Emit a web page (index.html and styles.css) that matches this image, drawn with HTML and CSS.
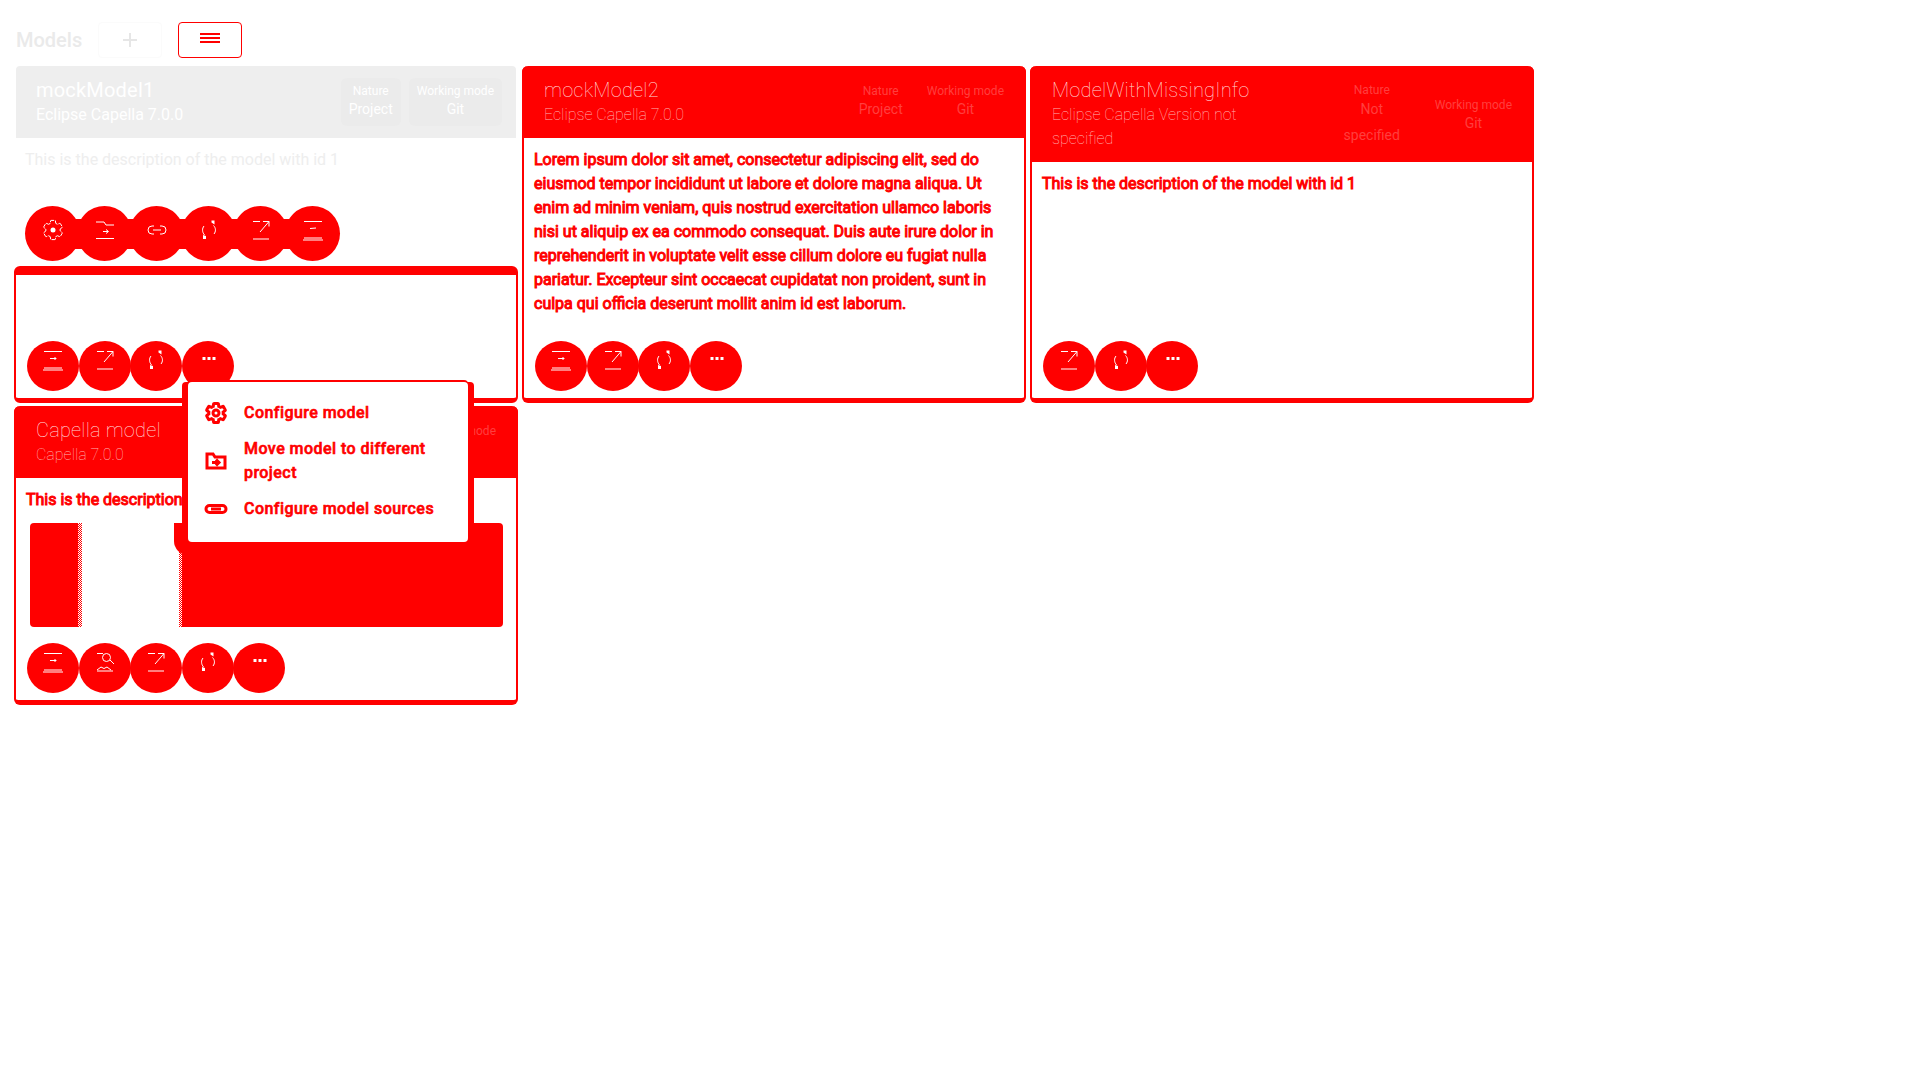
FILE: index.html
```html
<!DOCTYPE html>
<html lang="en">
<head>
    <meta charset="UTF-8">
    <title>Models</title>
    <link rel="stylesheet" href="styles.css">
</head>
<body>
    <svg class="icon-defs" width="0" height="0">
        <defs>
            <path id="gear-shape" d="M19.14 12.94c.04-.3.06-.61.06-.94 0-.32-.02-.64-.07-.94l2.03-1.58a.49.49 0 0 0 .12-.61l-1.92-3.32a.49.49 0 0 0-.59-.22l-2.39.96c-.5-.38-1.03-.7-1.62-.94l-.36-2.54a.48.48 0 0 0-.48-.41h-3.84a.48.48 0 0 0-.47.41l-.36 2.54c-.59.24-1.13.57-1.62.94l-2.39-.96a.49.49 0 0 0-.59.22L2.74 8.87a.48.48 0 0 0 .12.61l2.03 1.58c-.05.3-.09.63-.09.94s.02.64.07.94l-2.03 1.58a.49.49 0 0 0-.12.61l1.92 3.32c.12.22.37.29.59.22l2.39-.96c.5.38 1.03.7 1.62.94l.36 2.54c.05.24.24.41.48.41h3.84c.24 0 .44-.17.47-.41l.36-2.54c.59-.24 1.13-.56 1.62-.94l2.39.96c.22.08.47 0 .59-.22l1.92-3.32a.48.48 0 0 0-.12-.61l-2.01-1.58z"/>
            <symbol id="i-gear" viewBox="0 0 24 24"><use href="#gear-shape" stroke-dasharray="5 1"/><circle class="solid" cx="12" cy="12" r="2.5"/></symbol>
            <symbol id="i-move" viewBox="0 0 24 24"><path d="M3 4h8l2 3h8M10 13.500h5M13 11.500l2.500 2-2.500 2M3 20.500h18"/></symbol>
            <symbol id="i-link" viewBox="0 0 24 24"><path d="M9 8H7a4 4 0 0 0 0 8h2M15 8h2a4 4 0 0 1 0 8h-2M8 12h8"/></symbol>
            <symbol id="i-sync" viewBox="0 0 24 24"><path d="M7 8c-2 2.500-2 6 .5 9M17 16c2-2.500 2-6-.5-8.500"/><path class="solid" d="M14.500 2.500h3v4l-3-2zM6 17l3 1v3H6z"/></symbol>
            <symbol id="i-export" viewBox="0 0 24 24"><path d="M4 3.500h7M14 3.500h6v5M20 3.500l-9 10.500M4 21h16"/></symbol>
            <symbol id="i-push" viewBox="0 0 24 24"><path d="M3 3.500h18M9 10.500h6M13.500 9l1.500 1.500-1.500 1.500M3 20h18M2 22h20"/></symbol>
            <symbol id="i-pull" viewBox="0 0 24 24"><path d="M3 3.500h18M9 10.500l6-.5M3 20h18M2 22h20"/></symbol>
            <symbol id="i-diagram" viewBox="0 0 24 24"><path d="M4 3.500h6M4 21h16M4 20l4-3 3 1.500 3-1.500 4 3M17 10l4 4"/><circle cx="13.500" cy="7.500" r="4"/></symbol>
            <symbol id="i-dots" viewBox="0 0 24 24"><rect class="solid" x="6.500" y="9" width="3" height="3"/><rect class="solid" x="11.500" y="9" width="3" height="3"/><rect class="solid" x="16.500" y="9" width="3" height="3"/></symbol>
        </defs>
    </svg>

    <div class="topbar">
        <h1 class="page-title">Models</h1>
        <button class="top-btn top-btn-add">
            <svg class="top-icon" viewBox="0 0 16 16"><path d="M8 1v14M1 8h14"/></svg>
        </button>
        <button class="top-btn top-btn-menu">
            <svg class="top-icon" viewBox="0 0 20 10"><path d="M0 1h20M0 5h20M0 9h20"/></svg>
        </button>
    </div>

    <div class="cards">
        <div class="slot">
            <div class="card-pale">
                <div class="card-head">
                    <div class="head-text">
                        <div class="card-title">mockModel1</div>
                        <div class="card-sub">Eclipse Capella 7.0.0</div>
                    </div>
                    <div class="chips">
                        <div class="chip"><div class="chip-label">Nature</div><div class="chip-value">Project</div></div>
                        <div class="chip"><div class="chip-label">Working mode</div><div class="chip-value">Git</div></div>
                    </div>
                </div>
                <div class="card-body">
                    <p class="desc">This is the description of the model with id 1</p>
                    <div class="actions actions-joined">
                        <span class="act"><svg class="act-icon"><use href="#i-gear"/></svg></span>
                        <span class="act"><svg class="act-icon"><use href="#i-move"/></svg></span>
                        <span class="act"><svg class="act-icon"><use href="#i-link"/></svg></span>
                        <span class="act"><svg class="act-icon"><use href="#i-sync"/></svg></span>
                        <span class="act"><svg class="act-icon"><use href="#i-export"/></svg></span>
                        <span class="act"><svg class="act-icon"><use href="#i-pull"/></svg></span>
                    </div>
                </div>
            </div>
            <div class="card-outline">
                <div class="actions">
                    <span class="act"><svg class="act-icon"><use href="#i-push"/></svg></span>
                    <span class="act"><svg class="act-icon"><use href="#i-export"/></svg></span>
                    <span class="act"><svg class="act-icon"><use href="#i-sync"/></svg></span>
                    <span class="act"><svg class="act-icon"><use href="#i-dots"/></svg></span>
                </div>
            </div>
        </div>

        <div class="card">
            <div class="card-head">
                <div class="head-text">
                    <div class="card-title">mockModel2</div>
                    <div class="card-sub">Eclipse Capella 7.0.0</div>
                </div>
                <div class="chips">
                    <div class="chip"><div class="chip-label">Nature</div><div class="chip-value">Project</div></div>
                    <div class="chip"><div class="chip-label">Working mode</div><div class="chip-value">Git</div></div>
                </div>
            </div>
            <div class="card-body">
                <p class="desc">Lorem ipsum dolor sit amet, consectetur adipiscing elit, sed do eiusmod tempor incididunt ut labore et dolore magna aliqua. Ut enim ad minim veniam, quis nostrud exercitation ullamco laboris nisi ut aliquip ex ea commodo consequat. Duis aute irure dolor in reprehenderit in voluptate velit esse cillum dolore eu fugiat nulla pariatur. Excepteur sint occaecat cupidatat non proident, sunt in culpa qui officia deserunt mollit anim id est laborum.</p>
                <div class="actions">
                    <span class="act"><svg class="act-icon"><use href="#i-push"/></svg></span>
                    <span class="act"><svg class="act-icon"><use href="#i-export"/></svg></span>
                    <span class="act"><svg class="act-icon"><use href="#i-sync"/></svg></span>
                    <span class="act"><svg class="act-icon"><use href="#i-dots"/></svg></span>
                </div>
            </div>
        </div>

        <div class="card">
            <div class="card-head">
                <div class="head-text">
                    <div class="card-title">ModelWithMissingInfo</div>
                    <div class="card-sub">Eclipse Capella Version not specified</div>
                </div>
                <div class="chips chips-low">
                    <div class="chip chip-tall"><div class="chip-label">Nature</div><div class="chip-value">Not specified</div></div>
                    <div class="chip"><div class="chip-label">Working mode</div><div class="chip-value">Git</div></div>
                </div>
            </div>
            <div class="card-body">
                <p class="desc">This is the description of the model with id 1</p>
                <div class="actions">
                    <span class="act"><svg class="act-icon"><use href="#i-export"/></svg></span>
                    <span class="act"><svg class="act-icon"><use href="#i-sync"/></svg></span>
                    <span class="act"><svg class="act-icon"><use href="#i-dots"/></svg></span>
                </div>
            </div>
        </div>

        <div class="card">
            <div class="card-head">
                <div class="head-text">
                    <div class="card-title">Capella model</div>
                    <div class="card-sub">Capella 7.0.0</div>
                </div>
                <div class="chips">
                    <div class="chip"><div class="chip-label">Nature</div><div class="chip-value">Project</div></div>
                    <div class="chip"><div class="chip-label">Working mode</div><div class="chip-value">Git</div></div>
                </div>
            </div>
            <div class="card-body">
                <p class="desc">This is the description of the model with id 1</p>
                <div class="preview">
                    <div class="preview-solid"></div>
                    <div class="preview-dither"></div>
                    <div class="preview-gap"></div>
                    <div class="preview-dither preview-dither-right"></div>
                    <div class="preview-solid preview-solid-wide"></div>
                </div>
                <div class="actions">
                    <span class="act"><svg class="act-icon"><use href="#i-push"/></svg></span>
                    <span class="act"><svg class="act-icon"><use href="#i-diagram"/></svg></span>
                    <span class="act"><svg class="act-icon"><use href="#i-export"/></svg></span>
                    <span class="act"><svg class="act-icon"><use href="#i-sync"/></svg></span>
                    <span class="act"><svg class="act-icon"><use href="#i-dots"/></svg></span>
                </div>
            </div>
        </div>
    </div>

    <div class="menu">
        <div class="menu-item">
            <svg class="menu-icon" viewBox="0 0 24 24"><use href="#gear-shape"/><circle cx="12" cy="12" r="3"/></svg>
            <span>Configure model</span>
        </div>
        <div class="menu-item">
            <svg class="menu-icon" viewBox="0 0 24 24"><path d="M3 19V5h6l2 3h10v11zM8 13.500h7M12 10.500l3 3-3 3"/></svg>
            <span>Move model to different project</span>
        </div>
        <div class="menu-item">
            <svg class="menu-icon" viewBox="0 0 24 24"><rect x="2" y="8.500" width="20" height="7" rx="3.500"/><path d="M7 12h10"/></svg>
            <span>Configure model sources</span>
        </div>
    </div>
</body>
</html>
```

FILE: styles.css
```css
body {
    margin: 0;
    min-height: 100vh;
    background: white;
    font-family: Roboto, "Liberation Sans", sans-serif;
    position: relative;
}

.icon-defs {
    position: absolute;
}

/* top bar */
.topbar {
    display: flex;
    align-items: center;
    gap: 16px;
    padding: 22px 16px 8px;
}

.page-title {
    margin: 0;
    font-size: 20px;
    font-weight: 500;
    color: #eaeaea;
}

.top-btn {
    width: 64px;
    height: 36px;
    padding: 0;
    background: white;
    border-radius: 4px;
    display: flex;
    align-items: center;
    justify-content: center;
}

.top-btn-add {
    border: 1px solid #fbfbfb;
}

.top-btn-add .top-icon {
    width: 16px;
    height: 16px;
    stroke: #e6e6e6;
    stroke-width: 2;
}

.top-btn-menu {
    border: 1px solid #ff0000;
}

.top-btn-menu .top-icon {
    width: 20px;
    height: 10px;
    margin-top: -4px;
    stroke: #ff0000;
    stroke-width: 2;
}

/* cards */
.cards {
    display: grid;
    grid-template-columns: repeat(3, 504px);
    grid-template-rows: 337px 299px;
    gap: 3px 4px;
    padding-left: 14px;
}

.slot {
    display: flex;
    flex-direction: column;
}

.card,
.card-outline {
    border: solid #ff0000;
    border-width: 0 2px 5px;
    border-radius: 6px;
    background: white;
    display: flex;
    flex-direction: column;
}

.card-outline {
    flex: 1;
    border-top-width: 9px;
    justify-content: flex-end;
    padding: 0 10px 7px;
}

.card-pale {
    height: 200px;
    margin: 0 2px;
    display: flex;
    flex-direction: column;
}

.card-head {
    background: #ff0000;
    color: white;
    padding: 11px 14px 11px 22px;
    margin: 0 -2px;
    border-radius: 6px 6px 0 0;
    display: flex;
    justify-content: space-between;
    align-items: center;
}

.card-pale .card-head {
    background: #eeeeee;
    margin: 0;
    padding-left: 20px;
    border-radius: 4px 4px 0 0;
}

.head-text {
    max-width: 240px;
    align-self: flex-start;
}

.card-title {
    font-size: 20px;
    line-height: 26px;
    font-weight: 100;
    letter-spacing: 0.2px;
    color: rgba(255, 255, 255, 0.85);
}

.card-sub {
    font-size: 16px;
    line-height: 24px;
    font-weight: 100;
    color: rgba(255, 255, 255, 0.7);
}

.card-pale .card-title,
.card-pale .card-sub {
    font-weight: 400;
    color: white;
}

.chips {
    display: flex;
    gap: 8px;
    flex-shrink: 0;
    align-items: center;
}

.chips-low {
    margin-top: 4px;
}

.chip {
    padding: 5px 8px 7px;
    text-align: center;
    border-radius: 6px;
    color: rgba(255, 255, 255, 0.25);
}

.card-pale .chip {
    background: #ebebeb;
    color: white;
}

.chip-tall {
    width: 78px;
    margin: -8px 0;
}

.chip-tall .chip-value {
    line-height: 26px;
    margin-top: -2px;
}

.chip-label {
    font-size: 12px;
    line-height: 16px;
}

.chip-value {
    font-size: 14px;
    line-height: 20px;
}

.card-body {
    flex: 1;
    padding: 10px 10px 7px;
    display: flex;
    flex-direction: column;
}

.card-pale .card-body {
    padding: 10px 9px 5px;
}

.desc {
    margin: 0;
    font-size: 16px;
    line-height: 24px;
    color: #ff0000;
    -webkit-text-stroke: 1px #ff0000;
}

.card-pale .desc {
    color: #eeeeee;
    -webkit-text-stroke: 0;
}

/* round action buttons */
.actions {
    margin-top: auto;
    margin-left: 1px;
    display: flex;
}

.actions-joined {
    align-self: flex-start;
    margin-left: 0;
    background: linear-gradient(#ff0000, #ff0000) center / calc(100% - 40px) 30px no-repeat;
}

.act {
    width: 52px;
    height: 50px;
    margin-right: -0.4px;
    flex-shrink: 0;
    border-radius: 50%;
    background: #ff0000;
    display: flex;
    justify-content: center;
    padding-top: 7px;
    box-sizing: border-box;
}

.actions-joined .act {
    height: 55px;
    width: 55px;
    margin-right: -3px;
    padding-top: 12px;
}

.act-icon {
    width: 24px;
    height: 24px;
    fill: none;
    stroke: white;
    stroke-width: 1;
}

#i-gear .solid,
#i-sync .solid,
#i-dots .solid {
    fill: white;
    stroke: none;
}

/* screenshot preview */
.preview {
    height: 104px;
    margin: 11px 3px 0 4px;
    display: flex;
    border-radius: 4px;
    overflow: hidden;
}

.preview-solid {
    width: 48px;
    background: #ff0000;
}

.preview-solid-wide {
    flex: 1;
}

.preview-dither {
    width: 4px;
    background: repeating-conic-gradient(#ff0000 0 25%, white 0 50%) 0 0 / 2px 2px;
}

.preview-dither-right {
    width: 3px;
}

.preview-gap {
    width: 97px;
}

/* context menu */
.menu {
    position: absolute;
    left: 188px;
    top: 382px;
    width: 280px;
    box-sizing: border-box;
    padding: 13px 0 15px;
    background: white;
    border-radius: 4px;
    box-shadow: -6px 0 0 #ff0000, 6px 0 0 #ff0000, 0 -2px 0 #ff0000;
}

.menu::before {
    content: "";
    position: absolute;
    left: -14px;
    top: 141px;
    width: 14px;
    height: 32px;
    background: #ff0000;
    border-radius: 0 0 0 14px;
}

.menu-item {
    display: flex;
    align-items: center;
    gap: 16px;
    padding: 6px 16px;
    font-size: 16px;
    font-weight: 500;
    line-height: 24px;
    letter-spacing: 0.45px;
    color: #ff0000;
    -webkit-text-stroke: 0.6px #ff0000;
}

.menu-icon {
    width: 24px;
    height: 24px;
    flex-shrink: 0;
    fill: none;
    stroke: #ff0000;
    stroke-width: 3;
}
```
